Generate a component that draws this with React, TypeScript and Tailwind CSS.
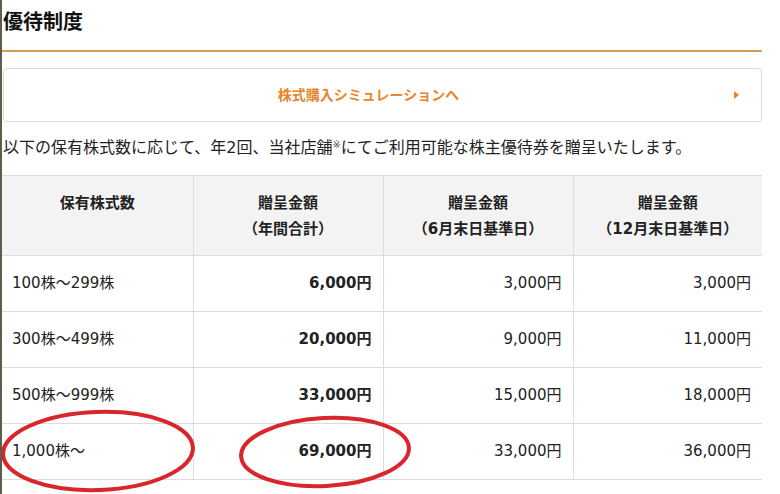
const rows = [
  { range: '100株～299株', total: '6,000円', june: '3,000円', dec: '3,000円' },
  { range: '300株～499株', total: '20,000円', june: '9,000円', dec: '11,000円' },
  { range: '500株～999株', total: '33,000円', june: '15,000円', dec: '18,000円' },
  { range: '1,000株～', total: '69,000円', june: '33,000円', dec: '36,000円' },
];

export default function App() {
  return (
    <div
      className="relative h-[494px] w-[780px] overflow-hidden border-l-2 border-[#5d5d4c] bg-white text-[#222]"
      style={{ fontFamily: '"DejaVu Sans", "Noto Sans CJK JP", sans-serif' }}
    >
      <div className="w-[760px]">
        <h1 className="flex h-[50px] items-center pb-[6px] pl-[1px] text-[20px] font-bold text-[#111]">
          優待制度
        </h1>
        <div className="h-[2px] bg-[#d99a55]" />

        <a className="mt-[16px] ml-[1px] flex h-[54px] items-center justify-center rounded-[3px] border border-[#dcdcdc] bg-white relative">
          <span className="pr-[28px] text-[14px] font-bold text-[#e8852b]">株式購入シミュレーションへ</span>
          <span className="absolute right-[22px] top-1/2 -translate-y-1/2 border-y-[4px] border-l-[5px] border-y-transparent border-l-[#e8852b]" />
        </a>

        <p className="mt-[14px] pl-[1px] text-[16px] leading-[24px]">
          以下の保有株式数に応じて、年2回、当社店舗<sup className="text-[10px] text-[#555]">※</sup>にてご利用可能な株主優待券を贈呈いたします。
        </p>

        <table className="mt-[15px] w-[760px] table-fixed border-collapse text-[15px]">
          <colgroup>
            <col className="w-[191px]" />
            <col className="w-[190px]" />
            <col className="w-[190px]" />
            <col className="w-[189px]" />
          </colgroup>
          <thead>
            <tr className="h-[80px] bg-[#f3f3f3]">
              <th className="border border-l-0 border-[#dcdcdc] pt-[14px] align-top font-bold leading-[26px]">保有株式数</th>
              <th className="border border-[#dcdcdc] pt-[14px] align-top font-bold leading-[26px]">
                贈呈金額
                <br />
                （年間合計）
              </th>
              <th className="border border-[#dcdcdc] pt-[14px] align-top font-bold leading-[26px]">
                贈呈金額
                <br />
                （6月末日基準日）
              </th>
              <th className="border border-r-0 border-[#dcdcdc] pt-[14px] align-top font-bold leading-[26px]">
                贈呈金額
                <br />
                （12月末日基準日）
              </th>
            </tr>
          </thead>
          <tbody>
            {rows.map((r) => (
              <tr key={r.range} className="h-[56px]">
                <td className="border border-l-0 border-[#dcdcdc] pl-[10px]">{r.range}</td>
                <td className="border border-[#dcdcdc] pr-[11px] text-right font-bold">{r.total}</td>
                <td className="border border-[#dcdcdc] pr-[11px] text-right">{r.june}</td>
                <td className="border border-r-0 border-[#dcdcdc] pr-[11px] text-right">{r.dec}</td>
              </tr>
            ))}
          </tbody>
        </table>
      </div>

      <svg className="pointer-events-none absolute left-0 top-0" width="780" height="494">
        <ellipse cx="96" cy="451" rx="95" ry="39" fill="none" stroke="#d9262a" strokeWidth="4" transform="rotate(-2 96 451)" />
        <ellipse cx="323" cy="452" rx="84" ry="34" fill="none" stroke="#d9262a" strokeWidth="4" transform="rotate(-3 323 452)" />
      </svg>
    </div>
  );
}
